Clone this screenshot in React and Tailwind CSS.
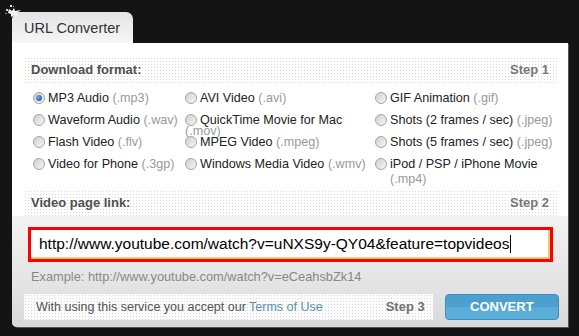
import React from "react";

const FONT = { fontFamily: "'Liberation Sans', Arial, sans-serif" };

const dots =
  "bg-[#ffffff] bg-[image:radial-gradient(circle,#d9d9d9_0.8px,transparent_0.9px)] bg-[length:3px_3px]";

const formats = [
  [["MP3 Audio", ".mp3", true], ["AVI Video", ".avi"], ["GIF Animation", ".gif"]],
  [["Waveform Audio", ".wav"], ["QuickTime Movie for Mac", ".mov", false, "wrap"], ["Shots (2 frames / sec)", ".jpeg"]],
  [["Flash Video", ".flv"], ["MPEG Video", ".mpeg"], ["Shots (5 frames / sec)", ".jpeg"]],
  [["Video for Phone", ".3gp"], ["Windows Media Video", ".wmv"], ["iPod / PSP / iPhone Movie", ".mp4", false, "wrap2"]],
];

function Radio({ on }) {
  return (
    <span className="relative mt-[1px] flex h-[12px] w-[12px] shrink-0 items-center justify-center rounded-full border border-[#a4a4a4] bg-[linear-gradient(135deg,#cfcfcf,#f7f7f7)]">
      {on && <span className="h-[6px] w-[6px] rounded-full bg-[radial-gradient(circle_at_35%_35%,#6fa4e8,#1746a0)]" />}
    </span>
  );
}

function Option({ label, ext, on, mode }) {
  return (
    <div className="flex h-[22px] items-start gap-[3px] pt-[3px]">
      <Radio on={on} />
      {mode === "wrap" ? (
        <div className="w-[165px] text-[12.6px] leading-[14px] text-[#222]">
          {label}
          <div className="-mt-[3px] -ml-[15px] text-[#999]">({ext})</div>
        </div>
      ) : mode === "wrap2" ? (
        <div className="text-[12.6px] leading-[15px] text-[#222]">
          {label}
          <div className="text-[#999]">({ext})</div>
        </div>
      ) : (
        <div className="whitespace-nowrap text-[12.6px] leading-[14px] text-[#222]">
          {label} <span className="text-[#999]">({ext})</span>
        </div>
      )}
    </div>
  );
}

function Band({ title, step }) {
  return (
    <div className={`flex h-[26px] items-center justify-between pl-[7px] pr-[9px] ${dots}`}>
      <span className="text-[13px] font-bold text-[#505050]">{title}</span>
      <span className="text-[13px] font-bold text-[#777]">{step}</span>
    </div>
  );
}

export default function App() {
  return (
    <div className="relative h-[336px] w-[579px] overflow-hidden bg-[#141414]" style={FONT}>
      {/* little sparkle logo in the corner */}
      <svg className="absolute left-[3px] top-[4px]" width="20" height="14" viewBox="0 0 20 14">
        <path d="M6 5 L9 7 L11 4 L12 7 L18 6 L14 9 L15 12 L11 11 L8 13 L8 10 L5 9 Z" fill="#f4f4f4" />
        <rect x="7" y="1" width="2" height="2" fill="#e6e6e6" />
        <rect x="10" y="2" width="1" height="1" fill="#bbb" />
        <rect x="3" y="5" width="2" height="2" fill="#cfcfcf" />
        <rect x="2" y="9" width="2" height="1" fill="#888" />
      </svg>

      <div className="pl-[12px] pt-[12px]">
        <div className="flex h-[31px] w-[121px] items-center rounded-t-[7px] bg-[linear-gradient(#e4e4e4,#f6f6f6)] pl-[12px] pt-[3px]">
          <span className="text-[14.5px] text-[#333]">URL Converter</span>
        </div>

        <div className="flex h-[284px] w-[556px] flex-col overflow-hidden rounded-bl-[5px] bg-white shadow-[1px_1px_0_#555]">
          <div className="px-[10px] pl-[12px] pt-[14px]">
            <Band title="Download format:" step="Step 1" />
            <div className="grid grid-cols-[152px_190px_1fr] pl-[9px] pt-[5px]">
              {formats.flat().map(([label, ext, on, mode], i) => (
                <Option key={i} label={label} ext={ext} on={on} mode={mode} />
              ))}
            </div>
            <div className="mt-[14px]">
              <Band title="Video page link:" step="Step 2" />
            </div>
          </div>

          <div className="flex flex-1 flex-col bg-[linear-gradient(#f3f3f3,#e2e2e2_70%,#d8d8d8)]">
            <div className="pl-[16px] pt-[11px]">
              <div className="h-[35px] w-[525px] border-[3px] border-[#f00] bg-white p-0">
                <div className="flex h-full items-center border-b-2 border-r-2 border-[#f0c87a] pl-[8px]">
                  <span className="text-[15.5px] text-black">
                    http://www.youtube.com/watch?v=uNXS9y-QY04&amp;feature=topvideos
                  </span>
                  <span className="ml-[1px] h-[18px] w-[1px] bg-black" />
                </div>
              </div>
            </div>
            <div className="pl-[19px] pt-[5px] text-[12.8px] text-[#888]">
              Example: http://www.youtube.com/watch?v=eCeahsbZk14
            </div>
            <div className="flex items-center pl-[12px] pr-[9px] pt-[8px]">
              <div className={`flex h-[26px] w-[418px] items-center justify-between pl-[12px] pr-[8px] ${dots} opacity-90`}>
                <span className="text-[12.5px] text-[#444]">
                  With using this service you accept our <span className="text-[#4f88aa]">Terms of Use</span>
                </span>
                <span className="text-[13px] font-bold text-[#666]">Step 3</span>
              </div>
              <button className="ml-[12px] flex h-[26px] w-[117px] items-center justify-center rounded-[4px] border border-[#3c8dbe] bg-[linear-gradient(#4c9fcf_50%,#5aaed8_50%)] text-[13px] font-bold text-white">
                CONVERT
              </button>
            </div>
          </div>
        </div>
      </div>
    </div>
  );
}
